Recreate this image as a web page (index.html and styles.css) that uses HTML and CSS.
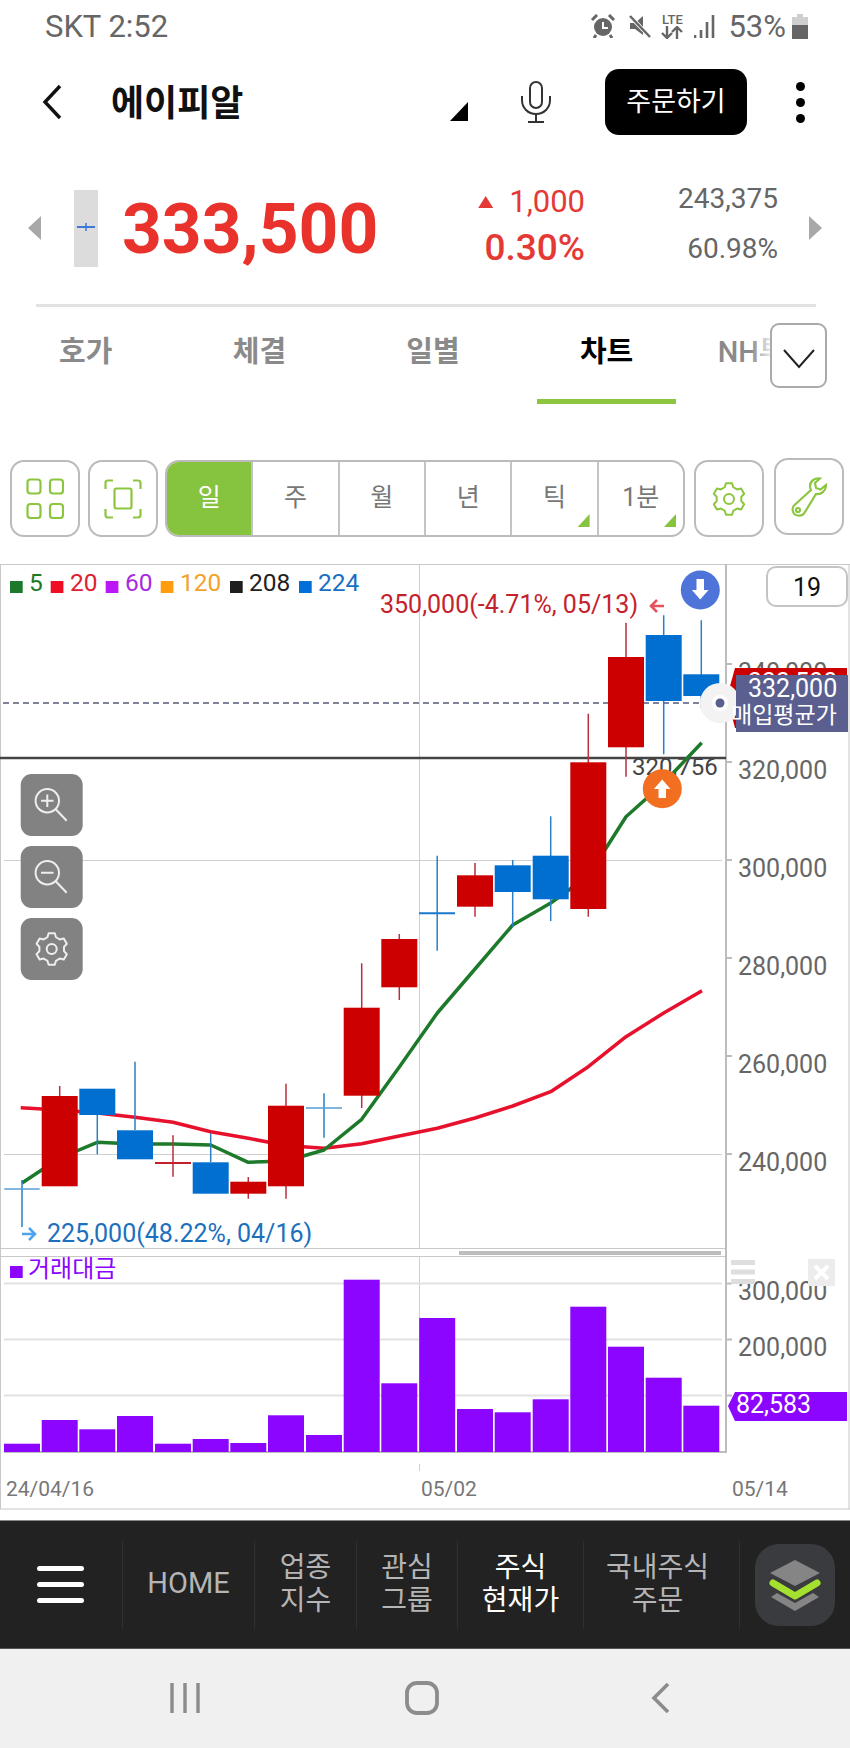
FILE: index.html
```html
<!DOCTYPE html>
<html lang="ko">
<head>
    <meta charset="UTF-8">
    <meta name="viewport" content="width=device-width, initial-scale=1.0">
    <title>에이피알 차트</title>
    <link rel="stylesheet" href="styles.css">
</head>
<body>
    <svg class="defs" width="0" height="0">
        <symbol id="gear" viewBox="-18 -18 36 36">
            <path d="M-4.28 -11.75L-3.05 -15.7L3.05 -15.7L4.28 -11.75L8.03 -9.58L12.08 -10.5L15.13 -5.21L12.31 -2.17L12.31 2.17L15.13 5.21L12.08 10.5L8.03 9.58L4.28 11.75L3.05 15.7L-3.05 15.7L-4.28 11.75L-8.03 9.58L-12.08 10.5L-15.13 5.21L-12.31 2.17L-12.31 -2.17L-15.13 -5.21L-12.08 -10.5L-8.03 -9.58Z" fill="none" stroke="currentColor" stroke-width="2" stroke-linejoin="round"/>
            <circle r="5" fill="none" stroke="currentColor" stroke-width="2"/>
        </symbol>
    </svg>

    <!-- Status bar -->
    <div class="status">
        <span class="status-left">SKT 2:52</span>
        <div class="status-right">
            <svg class="st-alarm" width="26" height="24" viewBox="0 0 26 24">
                <circle cx="13" cy="13" r="9" fill="#666"/>
                <path d="M13 8v6h5" fill="none" stroke="#fff" stroke-width="2"/>
                <path d="M2 6l5-5M24 6l-5-5M6 21l-2 3M20 21l2 3" stroke="#666" stroke-width="3"/>
            </svg>
            <svg class="st-mute" width="24" height="24" viewBox="0 0 24 24">
                <path d="M3 9h5l8-7v19l-8-6H3z" fill="#666"/>
                <path d="M3 2l20 21" stroke="#fff" stroke-width="4"/>
                <path d="M3 2l20 21" stroke="#666" stroke-width="2.5"/>
            </svg>
            <div class="st-lte">
                <span>LTE</span>
                <svg width="24" height="13" viewBox="0 0 24 13">
                    <path d="M7 0v11M2 7l5 5 5-5M17 13V2M12 6l5-5 5 5" fill="none" stroke="#666" stroke-width="2.4"/>
                </svg>
            </div>
            <svg class="st-signal" width="21" height="23" viewBox="0 0 21 23">
                <path d="M1 23v-3M7 23v-8M13 23V7M19 23V0" stroke="#666" stroke-width="2.6"/>
            </svg>
            <span class="st-pct">53%</span>
            <svg class="st-batt" width="16" height="25" viewBox="0 0 16 25">
                <path d="M5 0h6v3h5v22H0V3h5z" fill="#cfcfcf"/>
                <rect y="11" width="16" height="14" fill="#666"/>
            </svg>
        </div>
    </div>

    <!-- Header -->
    <div class="header">
        <svg class="back" width="20" height="36" viewBox="0 0 20 36">
            <path d="M18 2L3 18l15 16" fill="none" stroke="#111" stroke-width="3.4"/>
        </svg>
        <h1 class="title">에이피알</h1>
        <div class="corner-tri"></div>
        <svg class="mic" width="32" height="42" viewBox="0 0 32 42">
            <rect x="10" y="1" width="12" height="26" rx="6" fill="none" stroke="#333" stroke-width="2"/>
            <path d="M2 15v4c0 8 6 14 14 14s14-6 14-14v-4M16 33v8M8 41h16" fill="none" stroke="#333" stroke-width="2"/>
        </svg>
        <button class="order-btn">주문하기</button>
        <div class="dots"><i></i><i></i><i></i></div>
    </div>

    <!-- Price row -->
    <div class="quote">
        <div class="arrow-l"></div>
        <div class="mini">
            <svg width="24" height="12" viewBox="0 0 24 12">
                <path d="M3 6h18" stroke="#3b78d8" stroke-width="2"/>
                <path d="M12 2v8" stroke="#3b78d8" stroke-width="1.5"/>
            </svg>
        </div>
        <div class="price">333,500</div>
        <div class="change">
            <div class="change-top"><i class="up-tri"></i>1,000</div>
            <div class="change-pct">0.30%</div>
        </div>
        <div class="volume">
            <div>243,375</div>
            <div class="volume-pct">60.98%</div>
        </div>
        <div class="arrow-r"></div>
    </div>
    <div class="rule"></div>

    <!-- Tabs -->
    <div class="tabs">
        <div class="tab"><span>호가</span></div>
        <div class="tab"><span>체결</span></div>
        <div class="tab"><span>일별</span></div>
        <div class="tab tab-on"><span>차트</span></div>
        <div class="tab tab-cut"><span>NH투자</span></div>
        <div class="tab-fade"></div>
        <div class="tab-more">
            <svg width="32" height="20" viewBox="0 0 32 20">
                <path d="M1 1l15 17L31 1" fill="none" stroke="#222" stroke-width="2"/>
            </svg>
        </div>
    </div>

    <!-- Toolbar -->
    <div class="toolbar">
        <div class="tool">
            <svg width="38" height="41" viewBox="0 0 38 41">
                <rect x="1.5" y="1.5" width="13" height="14" rx="3"/>
                <rect x="24" y="1.5" width="13" height="14" rx="3"/>
                <rect x="1.5" y="26" width="13" height="14" rx="3"/>
                <rect x="24" y="26" width="13" height="14" rx="3"/>
            </svg>
        </div>
        <div class="tool">
            <svg width="38" height="40" viewBox="0 0 38 40">
                <path d="M9 1.500H4Q1.500 1.500 1.500 4v6M29 1.500h5Q36.500 1.500 36.500 4v6M9 38.500H4Q1.500 38.500 1.500 36v-6M29 38.500h5q2.500 0 2.500-2.500v-6"/>
                <rect x="10.500" y="9.500" width="17" height="20" rx="2"/>
            </svg>
        </div>
        <div class="periods">
            <div class="period period-on">일</div>
            <div class="period">주</div>
            <div class="period">월</div>
            <div class="period">년</div>
            <div class="period period-more">틱</div>
            <div class="period period-more">1분</div>
        </div>
        <div class="tool tool-gear">
            <svg width="36" height="36"><use href="#gear"/></svg>
        </div>
        <div class="tool tool-wrench">
            <svg width="36" height="40" viewBox="0 0 36 40">
                <path d="M29 1.500C24 .5 19 4 19 9c0 2 .5 3 1 4L3.500 28C0 31 1.500 38 7 38.500c4 .5 6-1.500 7-3.500l11-18c5 1 10-3 10-9l-5.500 4.500L25 11l-1-5z"/>
                <circle cx="7" cy="33" r="2"/>
            </svg>
        </div>
    </div>

    <!-- Chart, everything is placed on page coordinates through the viewBox -->
    <div class="chart">
        <svg class="chart-svg" width="850" height="946" viewBox="0 564 850 946">
            <!-- frame and grid -->
            <path class="frame" d="M0 564.500H850M.5 564V1509M849 564V1509M0 1509H850M0 1248.500H726M0 1256.500H726"/>
            <path class="grid" d="M4 860.500H722M4 1154.500H722M419.500 564V1248M419.500 1256V1452"/>
            <path class="grid-low" d="M4 1283.500H722M4 1339.500H722M4 1395.500H722"/>
            <path class="axis" d="M726 564V1452M4 1452H727M727 664H732M727 762H732M727 860H732M727 958H732M727 1056H732M727 1154H732M727 1283.500H732M727 1339.500H732M727 1395.500H732"/>
            <path class="grid" d="M419.500 1464V1471"/>
            <rect class="scrollbar" x="459" y="1251" width="262" height="4"/>

            <path class="dash" d="M3 703H720"/>
            <path class="zero" d="M0 758H726"/>
            <text class="t-small" x="632" y="775">320,756</text>

            <!-- moving averages -->
            <polyline class="ma-red" points="20.700,1107.700 59.700,1110 97.300,1113 135,1117.300 173,1122.300 210.700,1131.700 248.300,1138.300 286,1145.500 324,1148.300 361.700,1143.700 399.300,1136 437.300,1128.300 475,1118 512.700,1106 550.700,1091.700 588.300,1066.700 626,1036.700 663.700,1013 702,990.700"/>
            <polyline class="ma-green" points="22,1183 59.700,1158 97.300,1142.300 135,1144 173,1144 210.700,1145 248.300,1162.300 286,1161 324,1150 361.700,1119.300 399.300,1067 437.300,1013 475,969 512.700,925 550.700,903 588.300,876 626,816.700 663.700,783 701.700,742.700"/>

            <!-- wicks -->
            <path class="wick-blue" d="M22 1180V1227M97.300 1115V1154.300M135 1061.700V1130M210.700 1133.300V1162M324 1093.300V1137.700M437.200 855.700V950.700M512.700 860V927M550.700 816.300V921M663.700 615.300V754.300M701.300 620.300V708"/>
            <path class="wick-red" d="M59.700 1086V1096M173 1135.300V1176.700M248.300 1177V1198.700M286 1083.700V1198.700M361.700 963.300V1108M399.300 934V1000M475 863V916.700M588.300 713.700V916.700M626 622.700V776.700"/>
            <path class="doji-pale" d="M4.300 1189H39.700M306 1108H342"/>
            <path class="doji-blue" d="M419 913.300H455"/>
            <path class="doji-red" d="M155 1163H191"/>

            <!-- candle bodies -->
            <g class="body-red">
                <rect x="41.700" y="1096" width="36" height="90.300"/>
                <rect x="230.300" y="1181.700" width="36" height="12"/>
                <rect x="268" y="1105.700" width="36" height="80.600"/>
                <rect x="343.700" y="1007.700" width="36" height="88"/>
                <rect x="381.300" y="939" width="36" height="48.300"/>
                <rect x="457" y="875.300" width="36" height="31.400"/>
                <rect x="570.300" y="762.300" width="36" height="146.700"/>
                <rect x="608" y="657" width="36" height="90.300"/>
            </g>
            <g class="body-blue">
                <rect x="79.300" y="1088.700" width="36" height="26.300"/>
                <rect x="117" y="1130.300" width="36" height="29"/>
                <rect x="192.700" y="1162.300" width="36" height="31.400"/>
                <rect x="494.700" y="865.300" width="36" height="26.700"/>
                <rect x="532.700" y="855.700" width="36" height="43.600"/>
                <rect x="645.700" y="635" width="36" height="66"/>
                <rect x="683.300" y="674.300" width="36" height="21.700"/>
            </g>

            <!-- volume bars -->
            <g class="bars">
                <rect x="4" y="1443.700" width="36" height="8.300"/>
                <rect x="41.700" y="1420" width="36" height="32"/>
                <rect x="79.300" y="1429.300" width="36" height="22.700"/>
                <rect x="117" y="1416" width="36" height="36"/>
                <rect x="155" y="1443.700" width="36" height="8.300"/>
                <rect x="192.700" y="1439" width="36" height="13"/>
                <rect x="230.300" y="1443" width="36" height="9"/>
                <rect x="268" y="1415.300" width="36" height="36.700"/>
                <rect x="306" y="1435" width="36" height="17"/>
                <rect x="343.700" y="1279.700" width="36" height="172.300"/>
                <rect x="381.300" y="1383.300" width="36" height="68.700"/>
                <rect x="419.200" y="1318" width="36" height="134"/>
                <rect x="457" y="1409" width="36" height="43"/>
                <rect x="494.700" y="1412.300" width="36" height="39.700"/>
                <rect x="532.700" y="1399.300" width="36" height="52.700"/>
                <rect x="570.300" y="1306.700" width="36" height="145.300"/>
                <rect x="608" y="1346.700" width="36" height="105.300"/>
                <rect x="645.700" y="1377.700" width="36" height="74.300"/>
                <rect x="683.300" y="1405.700" width="36" height="46.300"/>
            </g>

            <!-- legend -->
            <rect class="k-green" x="10" y="581" width="12.700" height="12"/>
            <text class="t-legend c-green" x="29" y="591">5</text>
            <rect class="k-red" x="50.700" y="581" width="12.700" height="12"/>
            <text class="t-legend c-red" x="70" y="591">20</text>
            <rect class="k-purple" x="105.700" y="581" width="12.700" height="12"/>
            <text class="t-legend c-purple" x="125" y="591">60</text>
            <rect class="k-orange" x="160.700" y="581" width="12.700" height="12"/>
            <text class="t-legend c-orange" x="180" y="591">120</text>
            <rect class="k-black" x="230" y="581" width="12.700" height="12"/>
            <text class="t-legend c-black" x="249" y="591">208</text>
            <rect class="k-blue" x="299" y="581" width="12.700" height="12"/>
            <text class="t-legend c-blue" x="318" y="591">224</text>

            <rect class="k-vol" x="10" y="1266" width="12.700" height="12"/>
            <text class="t-vol" x="28" y="1277">거래대금</text>

            <!-- high and low marks -->
            <text class="t-high" x="380" y="613">350,000(-4.71%, 05/13)</text>
            <path class="arrow-high" d="M664 606H651M657 600l-6 6 6 6"/>
            <circle class="mark-down" cx="700.300" cy="590" r="19.500"/>
            <path class="mark-glyph" d="M696.500 579h7.500v11h4.500l-8.300 9.500-8.300-9.500h4.600z"/>
            <circle class="mark-up" cx="662.300" cy="788.700" r="19.500"/>
            <path class="mark-glyph" d="M658.500 798h7.500v-9h4.500l-8.300-9.500-8.300 9.500h4.600z"/>
            <text class="t-low" x="47" y="1242">225,000(48.22%, 04/16)</text>
            <path class="arrow-low" d="M22 1234H35M29 1228l6 6-6 6"/>

            <!-- price axis -->
            <text class="t-axis" x="738" y="681">340,000</text>
            <text class="t-axis" x="738" y="779">320,000</text>
            <text class="t-axis" x="738" y="877">300,000</text>
            <text class="t-axis" x="738" y="975">280,000</text>
            <text class="t-axis" x="738" y="1073">260,000</text>
            <text class="t-axis" x="738" y="1171">240,000</text>
            <text class="t-axis" x="738" y="1300">300,000</text>
            <text class="t-axis" x="738" y="1356">200,000</text>
            <text class="t-date" x="6" y="1496">24/04/16</text>
            <text class="t-date" x="421" y="1496">05/02</text>
            <text class="t-date" x="732" y="1496">05/14</text>

            <!-- current price and average price tags -->
            <path class="tag-red" d="M727 697L735 668H847V728H735Z"/>
            <text class="t-tag" x="748" y="691">333,500</text>
            <circle class="halo" cx="720" cy="703" r="20"/>
            <rect class="tag-avg" x="736" y="675" width="112" height="57"/>
            <circle class="dot-ring" cx="720" cy="703" r="8"/>
            <circle class="dot" cx="720" cy="703" r="4.500"/>
            <text class="t-tag" x="748" y="697">332,000</text>
            <text class="t-avg" x="731" y="723">매입평균가</text>

            <path class="tag-vol" d="M728 1406L735 1392H847V1421H735Z"/>
            <text class="t-tag" x="736" y="1413">82,583</text>

            <!-- panel controls -->
            <path class="panel-menu" d="M731 1262.500H755M731 1272H755M731 1281.500H755"/>
            <rect class="panel-close" x="808" y="1259" width="27" height="27"/>
            <path class="panel-x" d="M815 1266l13 13M828 1266l-13 13"/>

            <!-- period box -->
            <rect class="count-box" x="767" y="567" width="80" height="39" rx="9"/>
            <text class="t-count" x="807" y="596">19</text>

            <!-- zoom buttons -->
            <rect class="zoom-btn" x="20.700" y="774" width="62" height="62" rx="11"/>
            <circle class="zoom-ic" cx="47.300" cy="800.700" r="11.700"/>
            <path class="zoom-ic" d="M55.500 809l11.200 11.700M41 800.700H53.500M47.300 794.500V807"/>
            <rect class="zoom-btn" x="20.700" y="846" width="62" height="62" rx="11"/>
            <circle class="zoom-ic" cx="47.300" cy="872.700" r="11.700"/>
            <path class="zoom-ic" d="M55.500 881l11.200 11.700M41 872.700H53.500"/>
            <rect class="zoom-btn" x="20.700" y="918" width="62" height="62" rx="11"/>
            <use class="zoom-gear" href="#gear" x="33.700" y="931" width="36" height="36"/>
        </svg>
    </div>

    <!-- Bottom nav -->
    <div class="nav">
        <div class="nav-menu"><i></i><i></i><i></i></div>
        <div class="nav-item nav-home">HOME</div>
        <div class="nav-item nav-w1">업종<br>지수</div>
        <div class="nav-item nav-w2">관심<br>그룹</div>
        <div class="nav-item nav-w3 nav-on">주식<br>현재가</div>
        <div class="nav-item nav-w4">국내주식<br>주문</div>
        <div class="layers">
            <svg width="52" height="52" viewBox="0 0 52 52">
                <path d="M2 38l24 14 24-14-6-4-18 10-18-10z" fill="#858585"/>
                <path d="M26 1L51 14 26 27 1 14z" fill="#858585"/>
                <path d="M4 24l22 13 22-13" fill="none" stroke="#a4e02e" stroke-width="7" stroke-linecap="round" stroke-linejoin="round"/>
            </svg>
        </div>
    </div>

    <!-- Android keys -->
    <div class="softkeys">
        <svg class="key-recent" width="32" height="32" viewBox="0 0 32 32">
            <path d="M3 1v30M16 1v30M29 1v30" stroke="#8c8c8c" stroke-width="3.400"/>
        </svg>
        <svg class="key-home" width="34" height="34" viewBox="0 0 34 34">
            <rect x="2" y="2" width="30" height="30" rx="10" fill="none" stroke="#8c8c8c" stroke-width="3.800"/>
        </svg>
        <svg class="key-back" width="20" height="30" viewBox="0 0 20 30">
            <path d="M17 1L3 15l14 14" fill="none" stroke="#8c8c8c" stroke-width="3.600"/>
        </svg>
    </div>
</body>
</html>
```

FILE: styles.css
```css
* {
    box-sizing: border-box;
}
html, body {
    margin: 0;
    padding: 0;
}
body {
    width: 850px;
    height: 1748px;
    overflow: hidden;
    background: #fff;
    font-family: Roboto, "Noto Sans CJK KR", sans-serif;
}
.defs {
    display: block;
    height: 0;
}

/* status bar */
.status {
    height: 52px;
    display: flex;
    align-items: center;
    justify-content: space-between;
    padding: 0 42px 0 45px;
    color: #666;
}
.status-left {
    font-size: 31px;
}
.status-right {
    display: flex;
    align-items: center;
}
.st-mute { margin-left: 11px; }
.st-lte {
    margin-left: 8px;
    width: 26px;
    display: flex;
    flex-direction: column;
    align-items: center;
    font-size: 13px;
    font-weight: 500;
    line-height: 13px;
}
.st-signal { margin-left: 9px; }
.st-pct { margin-left: 13px; font-size: 31px; }
.st-batt { margin-left: 6px; }

/* header */
.header {
    height: 100px;
    display: flex;
    align-items: center;
    padding-left: 42px;
}
.title {
    margin: 4px 0 0 49px;
    width: 339px;
    font-size: 36px;
    font-weight: 700;
    color: #111;
    line-height: 44px;
}
.corner-tri {
    width: 18px;
    height: 19px;
    margin-top: 19px;
    background: #000;
    clip-path: polygon(100% 0, 100% 100%, 0 100%);
}
.mic { margin-left: 52px; }
.order-btn {
    margin-left: 53px;
    width: 142px;
    height: 66px;
    border: 0;
    border-radius: 14px;
    background: #000;
    color: #fff;
    font-family: inherit;
    font-size: 27px;
    font-weight: 400;
    padding: 0 0 6px;
}
.dots {
    margin-left: 49px;
    display: flex;
    flex-direction: column;
    gap: 7px;
}
.dots i {
    display: block;
    width: 9px;
    height: 9px;
    border-radius: 50%;
    background: #000;
}

/* price row */
.quote {
    height: 152px;
    display: flex;
    align-items: center;
    padding-left: 28px;
    padding-top: 4px;
}
.arrow-l, .arrow-r {
    width: 13px;
    height: 24px;
    background: #a8a8a8;
    margin-top: -4px;
}
.arrow-l { clip-path: polygon(100% 0, 100% 100%, 0 50%); }
.arrow-r {
    margin-left: 31px;
    clip-path: polygon(0 0, 100% 50%, 0 100%);
}
.mini {
    margin-left: 33px;
    margin-top: -4px;
    width: 24px;
    height: 77px;
    background: #dcdcdc;
    display: flex;
    align-items: center;
    justify-content: center;
}
.mini svg {
    margin-top: -3px;
}
.price {
    margin-left: 24px;
    width: 254px;
    font-size: 69.5px;
    font-weight: 700;
    color: #e9322b;
    line-height: 80px;
    white-space: nowrap;
}
.change {
    width: 209px;
    margin-top: -8px;
    text-align: right;
    color: #e53935;
}
.change-top {
    font-size: 31px;
    line-height: 40px;
    display: flex;
    align-items: center;
    justify-content: flex-end;
}
.up-tri {
    display: block;
    width: 15px;
    height: 12px;
    margin-right: 16px;
    background: #e53935;
    clip-path: polygon(50% 0, 100% 100%, 0 100%);
}
.change-pct {
    font-size: 37px;
    font-weight: 500;
    line-height: 44px;
    margin-top: 4px;
}
.volume {
    width: 193px;
    text-align: right;
    color: #666;
    font-size: 28px;
    line-height: 36px;
    margin-top: -12px;
}
.volume-pct {
    margin-top: 14px;
}
.rule {
    height: 3px;
    margin: 0 34px 0 36px;
    background: #e2e2e2;
}

/* tabs */
.tabs {
    position: relative;
    height: 97px;
    display: flex;
    overflow: hidden;
    margin-left: -1px;
}
.tab {
    flex: 0 0 173.6px;
    display: flex;
    justify-content: center;
}
.tab span {
    width: 139px;
    height: 97px;
    padding-top: 24px;
    border-bottom: 5px solid transparent;
    text-align: center;
    font-size: 29px;
    font-weight: 700;
    line-height: 42px;
    color: #8a8a8a;
}
.tab-on span {
    color: #000;
    border-bottom-color: #8cc63f;
}
.tab-cut span {
    white-space: nowrap;
    text-align: left;
    padding-left: 7px;
    font-weight: 500;
}
.tab-fade {
    position: absolute;
    left: 752px;
    top: 16px;
    width: 98px;
    height: 65px;
    background: linear-gradient(to right, rgba(255,255,255,0), #fff 24%);
}
.tab-more {
    position: absolute;
    left: 771px;
    top: 16px;
    width: 57px;
    height: 65px;
    border: 2px solid #aaa;
    border-radius: 9px;
    background: #fff;
    display: flex;
    align-items: center;
    justify-content: center;
    padding-top: 6px;
}

/* toolbar */
.toolbar {
    margin-top: 54px;
    height: 79px;
    padding-left: 10px;
    display: flex;
    align-items: flex-start;
}
.tool {
    width: 70px;
    height: 77px;
    margin-top: 2px;
    border: 2px solid #bbb;
    border-radius: 14px;
    display: flex;
    align-items: center;
    justify-content: center;
    color: #8cc63f;
    margin-right: 8px;
}
.tool svg {
    fill: none;
    stroke: #8cc63f;
    stroke-width: 2.2;
}
.tool-gear { margin-right: 10px; }
.tool-gear svg { stroke: none; }
.tool-wrench { margin-top: 0; margin-right: 0; }
.periods {
    width: 520px;
    height: 77px;
    margin: 2px 9px 0 -1px;
    border: 2px solid #bbb;
    border-radius: 14px;
    display: flex;
    overflow: hidden;
}
.period {
    position: relative;
    flex: 1;
    display: flex;
    align-items: center;
    justify-content: center;
    padding-bottom: 8px;
    border-left: 2px solid #c4c4c4;
    color: #777;
    font-size: 25px;
}
.period:first-child {
    border-left: 0;
}
.period-on {
    background: #86c440;
    color: #fff;
}
.period-more::after {
    content: "";
    position: absolute;
    right: 7px;
    bottom: 8px;
    width: 12px;
    height: 13px;
    background: #86c440;
    clip-path: polygon(100% 0, 100% 100%, 0 100%);
}

/* chart */
.chart {
    margin-top: 27px;
    height: 946px;
}
.chart-svg {
    display: block;
}
.frame { fill: none; stroke: #c8c8c8; stroke-width: 1; }
.grid { fill: none; stroke: #cfcfcf; stroke-width: 1; }
.grid-low { fill: none; stroke: #e2e2e2; stroke-width: 2; }
.axis { fill: none; stroke: #bdbdbd; stroke-width: 2; }
.scrollbar { fill: #bdbdbd; }
.dash { fill: none; stroke: #55587a; stroke-width: 1.5; stroke-dasharray: 6 4; }
.zero { fill: none; stroke: #444; stroke-width: 2.5; }
.ma-red { fill: none; stroke: #e8112d; stroke-width: 3.5; stroke-linejoin: round; }
.ma-green { fill: none; stroke: #1d7a2b; stroke-width: 3.5; stroke-linejoin: round; }
.wick-blue { fill: none; stroke: #2b7fc4; stroke-width: 1.5; }
.wick-red { fill: none; stroke: #b8303e; stroke-width: 1.5; }
.doji-pale { fill: none; stroke: #5a9fd4; stroke-width: 1.5; }
.doji-blue { fill: none; stroke: #1a78cc; stroke-width: 2; }
.doji-red { fill: none; stroke: #c4202c; stroke-width: 2; }
.body-red { fill: #cc0000; }
.body-blue { fill: #006fd0; }
.bars { fill: #8b05ff; }

.chart-svg text { font-family: Roboto, "Noto Sans CJK KR", sans-serif; }
.t-legend { font-size: 24.5px; }
.t-high, .t-low { font-size: 25px; }
.t-small { font-size: 24px; fill: #444; }
.c-green { fill: #1d7a2b; }
.c-red { fill: #e0202f; }
.c-purple { fill: #a82be0; }
.c-orange { fill: #f2a32c; }
.c-black { fill: #222; }
.c-blue { fill: #1a6fc0; }
.k-green { fill: #1d7a2b; }
.k-red { fill: #ee0d22; }
.k-purple { fill: #bb16f5; }
.k-orange { fill: #ff9d0e; }
.k-black { fill: #1e1e1e; }
.k-blue { fill: #0070d8; }
.k-vol { fill: #8b05ff; }
.t-vol { font-size: 24px; fill: #8b05ff; }
.t-high { fill: #c4222c; }
.t-low { fill: #1c70bd; }
.arrow-high { fill: none; stroke: #e8505a; stroke-width: 2.5; }
.arrow-low { fill: none; stroke: #4da3ef; stroke-width: 2.5; }
.mark-down { fill: #4f74d9; }
.mark-up { fill: #f26f21; }
.mark-glyph { fill: #fff; }
.t-axis { font-size: 25px; fill: #666; }
.t-date { font-size: 21px; fill: #777; }
.tag-red { fill: #cc0000; }
.tag-avg { fill: #5a5f8f; }
.tag-vol { fill: #8b05ff; }
.halo { fill: #f3f3f3; }
.dot-ring { fill: #fff; }
.dot { fill: #5a5f8f; }
.t-tag { font-size: 25px; fill: #fff; }
.t-avg { font-size: 23px; fill: #fff; }
.panel-menu { fill: none; stroke: #dedede; stroke-width: 5; }
.panel-close { fill: #ececec; }
.panel-x { fill: none; stroke: #fff; stroke-width: 4; }
.count-box { fill: #fff; stroke: #c4c4c4; stroke-width: 2; }
.t-count { font-size: 25px; fill: #111; text-anchor: middle; }
.zoom-btn { fill: #7f7f7f; fill-opacity: 0.98; }
.zoom-ic { fill: none; stroke: #eee; stroke-width: 2; }
.zoom-gear { color: #eee; }

/* bottom nav */
.nav {
    margin-top: 10px;
    height: 129px;
    background: #222;
    border-top: 1px solid #888;
    border-bottom: 1px solid #555;
    display: flex;
    align-items: center;
}
.nav-menu {
    width: 122px;
    height: 82px;
    padding-left: 37px;
    display: flex;
    flex-direction: column;
    justify-content: center;
    gap: 11px;
}
.nav-menu i {
    display: block;
    width: 47px;
    height: 5px;
    border-radius: 3px;
    background: #fff;
}
.nav-item {
    height: 88px;
    border-left: 1px solid #303030;
    display: flex;
    align-items: center;
    justify-content: center;
    text-align: center;
    color: #b5b5b5;
    font-size: 28px;
    line-height: 33px;
    padding-bottom: 2px;
}
.nav-home { width: 132px; font-size: 29px; }
.nav-w1 { width: 102px; }
.nav-w2 { width: 101px; }
.nav-w3 { width: 126px; }
.nav-w4 { width: 157px; padding-right: 8px; border-right: 1px solid #303030; }
.nav-on { color: #fff; }
.layers {
    margin-left: 15px;
    width: 80px;
    height: 82px;
    border-radius: 24px;
    background: #3a3b3e;
    display: flex;
    align-items: center;
    justify-content: center;
}

/* android keys */
.softkeys {
    height: 99px;
    background: #f0f0f0;
    display: flex;
    align-items: center;
    padding-left: 169px;
    padding-bottom: 2px;
}
.key-home { margin-left: 204px; }
.key-back { margin-left: 212px; }
```
